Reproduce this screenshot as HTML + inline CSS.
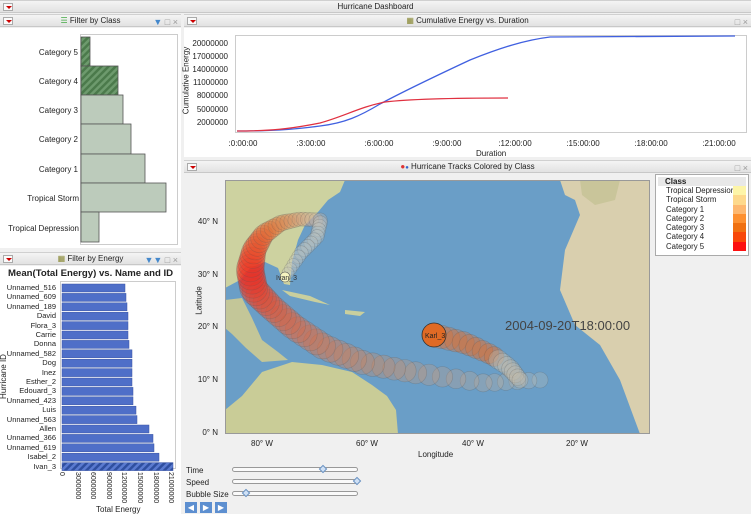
<!DOCTYPE html>
<html><head><meta charset="utf-8"><style>
*{box-sizing:border-box;margin:0;padding:0}
body{width:751px;height:514px;overflow:hidden;background:#f0f0f0;font-family:"Liberation Sans",sans-serif;font-size:8px;color:#222;position:relative}
.abs{position:absolute}
.hdr{position:absolute;height:13px;background:linear-gradient(#f4f4f4,#e2e2e2);border-bottom:1px solid #c8c8c8;border-top:1px solid #d0d0d0;font-size:8px;line-height:12px;text-align:center}
.tri{position:absolute;left:3px;top:2px;width:10px;height:8px;border:1px solid #aaa;background:#fafafa}
.tri:after{content:"";position:absolute;left:2px;top:2px;border-left:3px solid transparent;border-right:3px solid transparent;border-top:3px solid #c00}
.pan{position:absolute;background:#fff}
.lbl{position:absolute;font-size:8px;white-space:nowrap}
.r{text-align:right}
.ctl{position:absolute;right:3px;top:1px;font-size:9px;color:#999}
</style></head><body>
<div class="hdr" style="left:0;top:0;width:751px">Hurricane Dashboard<div class="tri"></div></div>

<div class="hdr" style="left:0;top:14px;width:181px"><span style="color:#4a4">&#9776;</span> Filter by Class<div class="tri"></div><div class="ctl"><span style="color:#48c">&#9660;</span> &#9633; &#215;</div></div>
<div class="pan" style="left:0;top:28px;width:181px;height:220px"></div>
<div class="abs" style="left:80px;top:34px;width:98px;height:211px;border:1px solid #ccc;background:#fff"></div>
<svg class="abs" style="left:0;top:0" width="181" height="250">
<defs><pattern id="h1" width="5" height="5" patternUnits="userSpaceOnUse" patternTransform="rotate(45)"><rect width="5" height="5" fill="#4b7a4b"/><rect width="2.5" height="5" fill="#6d9a6d"/></pattern>
<pattern id="h2" width="5" height="5" patternUnits="userSpaceOnUse" patternTransform="rotate(45)"><rect width="5" height="5" fill="#2f4fa0"/><rect width="2.5" height="5" fill="#5a7ad0"/></pattern></defs>
<g stroke="#555" stroke-width="0.8">
<rect x="81" y="37" width="9" height="29" fill="url(#h1)"/>
<rect x="81" y="66" width="37" height="29" fill="url(#h1)"/>
<rect x="81" y="95" width="42" height="29" fill="#bccbbb"/>
<rect x="81" y="124" width="50" height="30" fill="#bccbbb"/>
<rect x="81" y="154" width="64" height="29" fill="#bccbbb"/>
<rect x="81" y="183" width="85" height="29" fill="#bccbbb"/>
<rect x="81" y="212" width="18" height="30" fill="#bccbbb"/>
</g></svg>
<div class="lbl r" style="right:673px;top:48px">Category 5</div>
<div class="lbl r" style="right:673px;top:77px">Category 4</div>
<div class="lbl r" style="right:673px;top:106px">Category 3</div>
<div class="lbl r" style="right:673px;top:135px">Category 2</div>
<div class="lbl r" style="right:673px;top:165px">Category 1</div>
<div class="lbl r" style="right:672px;top:194px">Tropical Storm</div>
<div class="lbl r" style="right:672px;top:224px">Tropical Depression</div>

<div class="hdr" style="left:0;top:252px;width:181px"><span style="color:#883">&#9638;</span> Filter by Energy<div class="tri"></div><div class="ctl"><span style="color:#48c">&#9660;&#9660;</span> &#9633; &#215;</div></div>
<div class="pan" style="left:0;top:266px;width:181px;height:248px"></div>
<div class="lbl" style="left:8px;top:268px;font-size:9.6px;font-weight:bold">Mean(Total Energy) vs. Name and ID</div>
<div class="abs" style="left:60px;top:281px;width:116px;height:188px;border:1px solid #ccc;background:#fff"></div>
<svg class="abs" style="left:0;top:0" width="181" height="514" id="eb"></svg>
<div class="lbl" style="left:-19px;top:372px;transform:rotate(-90deg)">Hurricane ID</div>
<div class="lbl" style="left:96px;top:505px">Total Energy</div>

<div class="hdr" style="left:184px;top:14px;width:567px"><span style="color:#883">&#9638;</span> Cumulative Energy vs. Duration<div class="tri"></div><div class="ctl">&#9633; &#215;</div></div>
<div class="pan" style="left:184px;top:28px;width:567px;height:129px"></div>
<div class="abs" style="left:235px;top:35px;width:512px;height:98px;border:1px solid #ccc"></div>
<div class="lbl" style="left:152px;top:76px;transform:rotate(-90deg)">Cumulative Energy</div>
<div class="lbl" style="left:476px;top:149px">Duration</div>
<svg class="abs" style="left:0;top:0" width="751" height="160">
<path d="M237,131 C270,131 290,130 320,126 C345,123 360,116 380,104 C410,88 440,74 470,60 C500,48 525,40 550,37 L735,36" fill="none" stroke="#4060e0" stroke-width="1.3"/>
<path d="M237,131 C270,131 290,129 320,123 C345,116 360,107 385,102 C410,99 460,98 508,98" fill="none" stroke="#e03040" stroke-width="1.3"/>
</svg>

<div class="hdr" style="left:184px;top:160px;width:567px"><span style="color:#d33">&#9679;</span><span style="color:#36c;font-size:6px">&#9679;</span> Hurricane Tracks Colored by Class<div class="tri"></div><div class="ctl">&#9633; &#215;</div></div>
<div class="pan" style="left:184px;top:174px;width:567px;height:340px;background:#f0f0f0"></div>
<svg class="abs" style="left:225px;top:180px" width="425" height="254" viewBox="225 180 425 254">
<rect x="225" y="180" width="425" height="254" fill="#6a9ec7"/>
<path d="M225,180 L345,180 L340,192 L328,200 L318,212 L305,225 L298,240 L292,262 L290,285 L284,284 L278,268 L265,262 L250,268 L240,280 L225,288 Z" fill="#cdd2a0"/>
<path d="M225,300 L242,298 L252,318 L262,340 L278,352 L288,360 L262,362 L246,348 L232,334 L225,328 Z" fill="#c3c698"/>
<path d="M262,372 L292,362 L322,365 L352,372 L372,385 L387,396 L396,410 L398,434 L225,434 L225,410 L242,396 Z" fill="#c9cc97"/>
<path d="M282,290 L310,296 L330,305 L315,302 L290,296 Z" fill="#c9cf9e"/>
<path d="M345,310 L365,312 L360,316 L345,314Z" fill="#c9cf9e"/>
<path d="M560,180 L650,180 L650,434 L640,434 L620,380 L600,345 L575,325 L560,290 L565,250 L580,215 L575,200 L565,195 Z" fill="#d9cfae"/>
<path d="M580,180 L620,180 L615,200 L595,205 L582,195 Z" fill="#c9c59a"/>
<g id="bub"></g>
<text x="505" y="330" font-size="13" fill="#444" font-family="Liberation Sans">2004-09-20T18:00:00</text>
</svg>
<div class="abs" style="left:225px;top:180px;width:425px;height:254px;border:1px solid #999"></div>
<div class="lbl" style="left:185px;top:296px;transform:rotate(-90deg)">Latitude</div>
<div class="lbl" style="left:418px;top:450px">Longitude</div>
<div class="lbl r" style="right:533px;top:217px">40° N</div>
<div class="lbl r" style="right:533px;top:270px">30° N</div>
<div class="lbl r" style="right:533px;top:322px">20° N</div>
<div class="lbl r" style="right:533px;top:375px">10° N</div>
<div class="lbl r" style="right:533px;top:428px">0° N</div>
<div class="lbl" style="left:251px;top:439px">80° W</div>
<div class="lbl" style="left:356px;top:439px">60° W</div>
<div class="lbl" style="left:462px;top:439px">40° W</div>
<div class="lbl" style="left:566px;top:439px">20° W</div>
<div class="abs" style="left:655px;top:174px;width:94px;height:82px;border:1px solid #aaa;background:#fff;padding:2px">
<div style="background:#e8e8e8;height:9px;font-weight:bold;padding-left:7px;line-height:9px">Class</div>
<div id="leg"></div></div>
<div class="lbl" style="left:186px;top:466px">Time</div>
<div class="lbl" style="left:186px;top:478px">Speed</div>
<div class="lbl" style="left:186px;top:490px">Bubble Size</div>
<div class="abs" style="left:232px;top:467px;width:126px;height:5px;border:1px solid #999;border-radius:3px;background:#fafafa"></div>
<div class="abs" style="left:232px;top:479px;width:126px;height:5px;border:1px solid #999;border-radius:3px;background:#fafafa"></div>
<div class="abs" style="left:232px;top:491px;width:126px;height:5px;border:1px solid #999;border-radius:3px;background:#fafafa"></div>
<div class="abs" style="left:320px;top:466px;width:6px;height:6px;border:1px solid #6890c0;background:#cfe0f5;transform:rotate(45deg)"></div>
<div class="abs" style="left:354px;top:478px;width:6px;height:6px;border:1px solid #6890c0;background:#cfe0f5;transform:rotate(45deg)"></div>
<div class="abs" style="left:243px;top:490px;width:6px;height:6px;border:1px solid #6890c0;background:#cfe0f5;transform:rotate(45deg)"></div>
<div class="abs" style="left:185px;top:502px;width:12px;height:11px;background:#5d8fd0;color:#fff;font-size:8px;line-height:11px;text-align:center">&#9664;</div>
<div class="abs" style="left:200px;top:502px;width:12px;height:11px;background:#5d8fd0;color:#fff;font-size:8px;line-height:11px;text-align:center">&#9654;</div>
<div class="abs" style="left:215px;top:502px;width:12px;height:11px;background:#5d8fd0;color:#fff;font-size:8px;line-height:11px;text-align:center">&#9654;</div>

<script>
var NS="http://www.w3.org/2000/svg";
function el(p,t,a){var e=document.createElementNS(NS,t);for(var k in a)e.setAttribute(k,a[k]);p.appendChild(e);return e;}
function lbl(x,y,s,ex){var d=document.createElement('div');d.className='lbl';d.style.cssText='left:'+x+'px;top:'+y+'px;'+(ex||'');d.textContent=s;document.body.appendChild(d);return d;}
var names=["Unnamed_516","Unnamed_609","Unnamed_189","David","Flora_3","Carrie","Donna","Unnamed_582","Dog","Inez","Esther_2","Edouard_3","Unnamed_423","Luis","Unnamed_563","Allen","Unnamed_366","Unnamed_619","Isabel_2","Ivan_3"];
var w=[63,64,65,66,66,66,67,70,70,70,70,71,71,74,75,87,91,92,97,111];
var eb=document.getElementById('eb');
for(var i=0;i<20;i++){var y=284+i*9.4;
 el(eb,'rect',{x:62,y:y,width:w[i],height:8,fill:i==19?'url(#h2)':'#4f6fc8',stroke:'#3a55a5','stroke-width':0.5});
 lbl(0,y-1,names[i],'width:56px;text-align:right;font-size:7.5px');}
var ticks=["0","3000000","6000000","9000000","12000000","15000000","18000000","21000000"];
for(var i=0;i<8;i++){var x=61+i*15.6;lbl(x+4,472,ticks[i],'font-size:7px;transform-origin:0 0;transform:rotate(90deg)');}
var yl=["20000000","17000000","14000000","11000000","8000000","5000000","2000000"];
for(var i=0;i<7;i++){var y=44+i*13.1;lbl(0,y-5,yl[i],'width:228px;text-align:right');}
var xl=[":0:00:00",":3:00:00",":6:00:00",":9:00:00",":12:00:00",":15:00:00",":18:00:00",":21:00:00"];
for(var i=0;i<8;i++){lbl(243+i*68,139,xl[i],'transform:translateX(-50%)');}
var b=document.getElementById('bub');
function track(pts,n,cols){var segs=pts.length-1;for(var k=0;k<n;k++){var t=k/(n-1)*segs,s=Math.min(Math.floor(t),segs-1),f=t-s;
 var x=pts[s][0]+(pts[s+1][0]-pts[s][0])*f,y=pts[s][1]+(pts[s+1][1]-pts[s][1])*f,r=pts[s][2]+(pts[s+1][2]-pts[s][2])*f;
 el(b,'circle',{cx:x,cy:y,r:r,fill:cols(k/(n-1)),'fill-opacity':0.32,stroke:'#555','stroke-opacity':0.3,'stroke-width':0.6});}}
function mix(t){var st=[[185,190,185],[205,140,100],[225,100,60],[240,40,30],[225,110,50],[200,200,190],[200,200,190]];var p=t*(st.length-1),i=Math.min(Math.floor(p),st.length-2),f=p-i;var c=st[i].map(function(v,j){return Math.round(v+(st[i+1][j]-v)*f)});return 'rgb('+c+')';}
track([[540,380,8],[484,383,9],[417,373,11],[364,363,12],[324,347,13],[294,327,13],[271,307,13],[254,290,14],[250,270,14],[254,250,12],[264,234,10],[281,223,8],[300,219,7],[321,220,7],[317,237,7],[301,253,7],[288,273,6]],80,mix);
track([[434,335,12],[465,343,11],[492,355,10],[510,368,9],[520,380,8]],18,function(t){return t<0.55?'rgb(230,110,40)':'rgb(200,190,170)'});
el(b,'circle',{cx:434,cy:335,r:12,fill:'#e06a25',stroke:'#333','stroke-width':0.8});
el(b,'circle',{cx:285,cy:277,r:5,fill:'#f6f4c0',stroke:'#555','stroke-width':0.6});
var t1=el(b,'text',{x:276,y:280,'font-size':7,fill:'#333','font-family':'Liberation Sans'});t1.textContent='Ivan_3';
var t2=el(b,'text',{x:425,y:338,'font-size':7,fill:'#222','font-family':'Liberation Sans'});t2.textContent='Karl_3';
var lg=[["Tropical Depression","#fdf5a8"],["Tropical Storm","#fdd98c"],["Category 1","#fdb870"],["Category 2","#fd9030"],["Category 3","#f07010"],["Category 4","#f84808"],["Category 5","#fc1010"]];
var L=document.getElementById('leg');
lg.forEach(function(a){var d=document.createElement('div');d.style.cssText='height:9.3px;line-height:9.3px;padding-left:8px;position:relative;font-size:7.8px';d.textContent=a[0];var s=document.createElement('span');s.style.cssText='position:absolute;right:0;top:0;width:13px;height:9.3px;background:'+a[1];d.appendChild(s);L.appendChild(d);});
</script>
</body></html>
